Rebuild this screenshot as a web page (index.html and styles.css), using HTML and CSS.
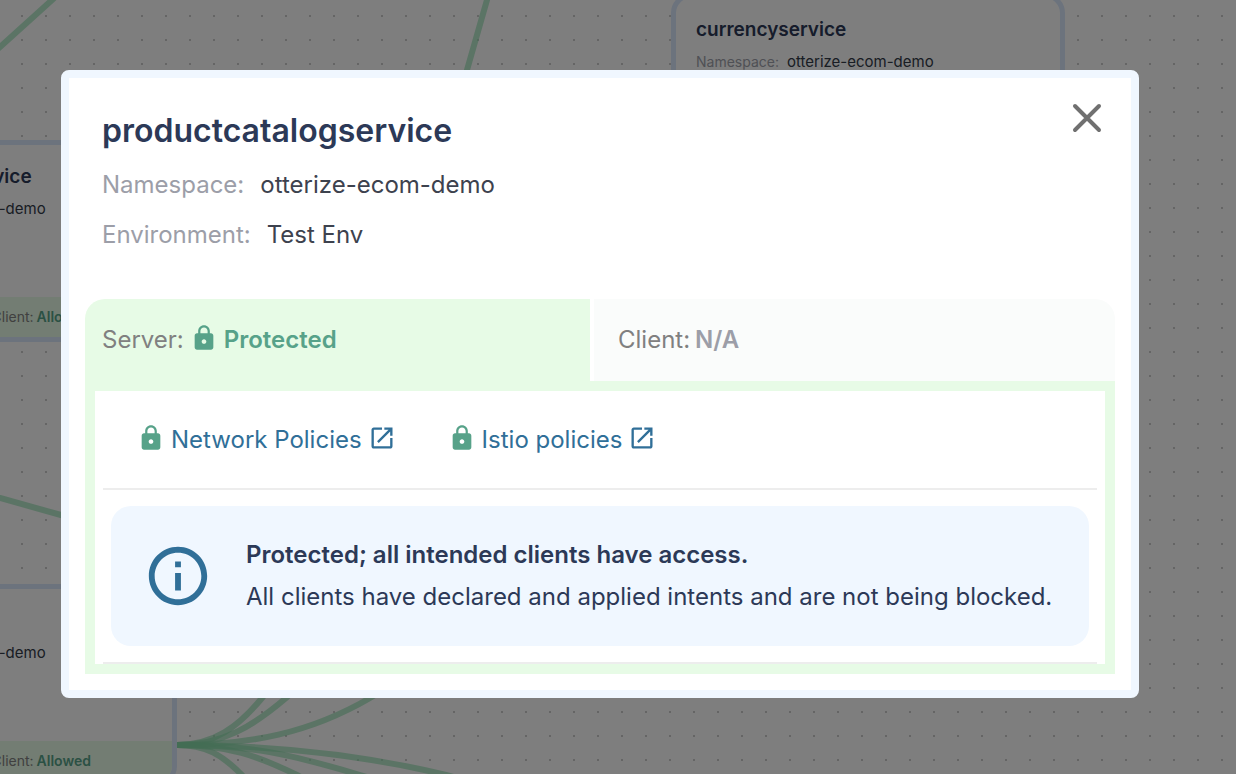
FILE: index.html
```html
<!DOCTYPE html>
<html lang="en">
<head>
<meta charset="utf-8">
<title>productcatalogservice</title>
<link rel="stylesheet" href="styles.css">
</head>
<body>
<svg class="symbols" aria-hidden="true">
  <symbol id="lock" viewBox="0 0 24 24"><path d="M18 8h-1V6c0-2.760-2.240-5-5-5S7 3.240 7 6v2H6c-1.100 0-2 .9-2 2v10c0 1.100.9 2 2 2h12c1.100 0 2-.9 2-2V10c0-1.100-.9-2-2-2zm-6 9c-1.100 0-2-.9-2-2s.9-2 2-2 2 .9 2 2-.9 2-2 2zm3.100-9H8.900V6c0-1.710 1.390-3.100 3.100-3.100s3.100 1.390 3.100 3.100v2z"/></symbol>
  <symbol id="open" viewBox="0 0 24 24"><path d="M19 19H5V5h7V3H5c-1.110 0-2 .9-2 2v14c0 1.100.89 2 2 2h14c1.100 0 2-.9 2-2v-7h-2v7zM14 3v2h3.590l-9.830 9.830 1.410 1.410L19 6.410V10h2V3h-7z"/></symbol>
</svg>

<div class="canvas" aria-hidden="true">
  <svg class="edges">
    <path d="M-20 65L0 47L52 0L70 -17"/>
    <path d="M492 -18L487 0L467 70L462 90"/>
    <path d="M-20 493L0 498L61 515L90 523"/>
    <path d="M177 745C214 745 238 727 262 698L280 676"/>
    <path d="M177 745C222 745 252 727 286 698L305 680"/>
    <path d="M177 745C250 745 310 733 370 698L400 680"/>
    <path d="M177 745C206 745 222 755 241 774L254 788"/>
    <path d="M177 745C228 745 258 756 297 775L320 787"/>
    <path d="M177 745C250 745 290 754 360 775L390 784"/>
    <path d="M177 745C270 745 360 754 446 775L480 784"/>
  </svg>
  <section class="node node-currency">
    <h2 class="node-name">currencyservice</h2>
    <p class="node-meta"><span class="muted">Namespace:</span><span class="node-value">otterize-ecom-demo</span></p>
  </section>
  <section class="node node-recommendation">
    <h2 class="node-name">recommendationservice</h2>
    <p class="node-meta"><span class="muted">Namespace:</span><span class="node-value">otterize-ecom-demo</span></p>
    <div class="node-status">Client:<b>Allowed</b></div>
  </section>
  <section class="node node-frontend">
    <h2 class="node-name">frontend</h2>
    <p class="node-meta"><span class="muted">Namespace:</span><span class="node-value">otterize-ecom-demo</span></p>
    <div class="node-status">Client:<b>Allowed</b></div>
  </section>
</div>

<div class="backdrop">
  <main class="dialog" role="dialog" aria-labelledby="title">
    <header class="header">
      <div class="details">
        <h1 class="title" id="title">productcatalogservice</h1>
        <p class="meta"><span class="label">Namespace:</span><span>otterize-ecom-demo</span></p>
        <p class="meta"><span class="label">Environment:</span><span>Test Env</span></p>
      </div>
      <button class="close" type="button" aria-label="Close">
        <svg viewBox="0 0 48 48"><path d="M12 12L36 36M36 12L12 36"/></svg>
      </button>
    </header>

    <div class="tabs" role="tablist">
      <button class="tab tab-server" type="button" role="tab" aria-selected="true">Server:
        <svg class="icon lock"><use href="#lock"/></svg><b>Protected</b></button>
      <button class="tab tab-client" type="button" role="tab" aria-selected="false">Client: <b>N/A</b></button>
    </div>

    <section class="panel" role="tabpanel">
      <nav class="links">
        <a class="link" href="#network"><svg class="icon lock"><use href="#lock"/></svg>Network Policies<svg class="icon"><use href="#open"/></svg></a>
        <a class="link" href="#istio"><svg class="icon lock"><use href="#lock"/></svg>Istio policies<svg class="icon"><use href="#open"/></svg></a>
      </nav>
      <div class="notice">
        <svg class="info" viewBox="0 0 24 24"><path d="M11 7h2v2h-2zm0 4h2v6h-2zm1-9C6.480 2 2 6.480 2 12s4.480 10 10 10 10-4.480 10-10S17.520 2 12 2zm0 18c-4.410 0-8-3.590-8-8s3.590-8 8-8 8 3.590 8 8-3.590 8-8 8z"/></svg>
        <div>
          <h2 class="notice-title">Protected; all intended clients have access.</h2>
          <p class="notice-text">All clients have declared and applied intents and are not being blocked.</p>
        </div>
      </div>
    </section>
  </main>
</div>
</body>
</html>
```
FILE: styles.css
```css
* { box-sizing: border-box; }
body {
  margin: 0;
  min-height: 100vh;
  overflow: hidden;
  font-family: Inter, "Liberation Sans", sans-serif;
  font-size: 24px;
  color: #2c3957;
}
h1, h2, p { margin: 0; }
button { border: 0; font: inherit; cursor: pointer; }
svg { fill: currentColor; flex: none; }
.symbols { position: absolute; width: 0; height: 0; }

/* Service map behind the dialog */
.canvas {
  position: fixed;
  inset: 0;
  overflow: hidden;
  background-color: #fcfcfc;
  background-image: conic-gradient(from 90deg at 22px 22px, #cacaca 25%, transparent 0);
  background-size: 24px 24px;
  background-position: -1px -7px;
}
.edges { position: absolute; inset: 0; width: 100%; height: 100%; }
.edges path { fill: none; stroke: #87daa8; stroke-width: 6; stroke-opacity: .6; }
.node {
  position: absolute;
  width: 394px;
  height: 202px;
  padding-top: 20px;
  display: flex;
  flex-direction: column;
  border: 5px solid #d8e6fb;
  border-radius: 20px;
  background: #fdfdfd;
  overflow: hidden;
}
.node-currency { left: 671px; top: -7px; }
.node-recommendation { left: -217px; top: 140px; }
.node-frontend { left: -217px; top: 584px; }
.node-name { padding: 0 20px; font-size: 19px; line-height: 24px; font-weight: 600; }
.node-meta {
  display: flex;
  gap: 8px;
  margin-top: 10px;
  padding: 0 20px;
  font-size: 14px;
  line-height: 20px;
  color: #333a48;
}
.node-value { font-size: 15px; }
.muted { color: #9fa1aa; }
.node-status {
  display: flex;
  gap: 3px;
  margin-top: auto;
  padding-left: 53%;
  font-size: 14px;
  line-height: 40px;
  color: #808080;
  background: #e7fbe6;
}
.node-status b { font-weight: 600; color: #57a289; }

/* Dialog */
.backdrop {
  position: relative;
  min-height: 100vh;
  padding: 70px 97px 70px 61px;
  background: rgba(0, 0, 0, .5);
}
.dialog {
  padding: 16px;
  border: 8px solid #f0f7ff;
  border-radius: 8px;
  background: #fff;
}
.header {
  display: flex;
  justify-content: space-between;
  align-items: flex-start;
  padding: 16px 4px 44px 17px;
}
.title { margin-bottom: 13px; font-size: 32px; line-height: 42px; font-weight: 600; }
.meta {
  display: flex;
  gap: 16px;
  line-height: 40px;
  color: #3d424e;
}
.meta + .meta { margin-top: 10px; }
.label { color: #9c9ea8; }
.close { margin-top: -16px; padding: 0; background: none; color: #707070; }
.close svg { display: block; width: 48px; height: 48px; stroke: currentColor; stroke-width: 4; stroke-linecap: round; }

.tabs { display: grid; grid-template-columns: 505fr 521fr; gap: 4px; }
.tab {
  display: flex;
  align-items: center;
  gap: 6px;
  height: 82px;
  padding: 0 17px 2px;
  color: #808080;
}
.tab b { font-weight: 600; }
.tab-server { border-radius: 20px 0 0 0; background: #e7fbe6; }
.tab-server b { color: #57a289; }
.tab-client { gap: 5px; padding-left: 24px; border-radius: 0 20px 0 0; background: #fafcfb; }
.tab-client b { color: #9c9ea8; }
.icon { width: 28px; height: 28px; margin-bottom: 3px; }
.lock { color: #57a289; }

.panel { padding: 0 8px; border: 10px solid #e7fbe6; }
.links {
  display: flex;
  gap: 52px;
  padding: 28px 34px;
  border-bottom: 2px solid #ededed;
  line-height: 41px;
}
.link {
  display: flex;
  align-items: center;
  gap: 6px;
  color: #306f98;
  text-decoration: none;
}
.notice {
  display: flex;
  align-items: center;
  gap: 33px;
  margin: 16px 8px;
  padding: 28px 32px;
  border-radius: 20px;
  background: #f0f7ff;
}
.panel::after { content: ""; display: block; height: 2px; background: #ededed; }
.info { width: 70px; height: 70px; color: #306f98; }
.notice-title { font-size: 24px; line-height: 42px; font-weight: 600; }
.notice-text { line-height: 42px; }
```
